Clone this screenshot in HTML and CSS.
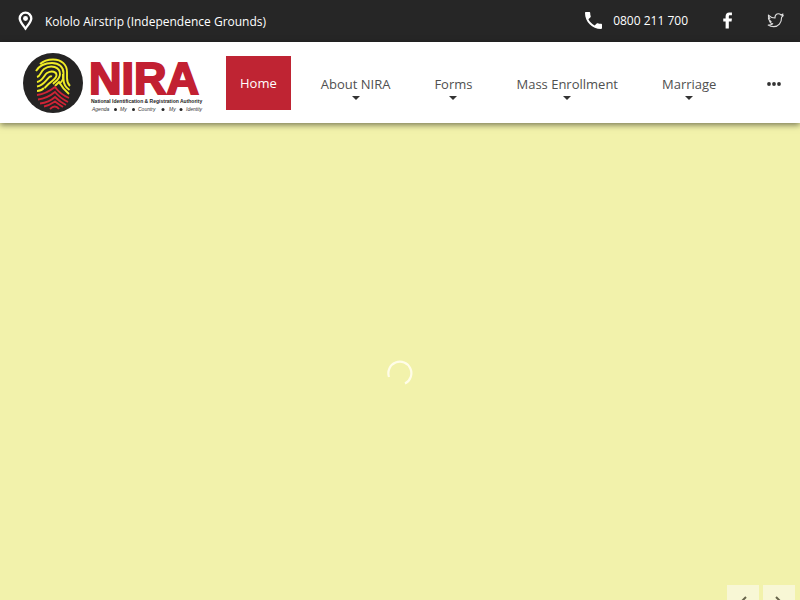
FILE: index.html
```html
<!DOCTYPE html>
<html lang="en">
<head>
<meta charset="utf-8">
<meta name="viewport" content="width=device-width, initial-scale=1">
<title>NIRA</title>
<link rel="stylesheet" href="styles.css">
</head>
<body>
<div class="topbar">
  <div class="address">
    <svg class="pin" viewBox="0 0 14 18" aria-hidden="true"><path fill="none" stroke="#fff" stroke-width="2.2" d="M7 16C4.500 12.500 1.600 9.500 1.600 6.600a5.400 5.400 0 0 1 10.800 0C12.400 9.500 9.500 12.500 7 16Z"/><circle cx="7" cy="6.600" r="2.300" fill="#fff"/></svg>
    <span>Kololo Airstrip (Independence Grounds)</span>
  </div>
  <div class="contacts">
    <a class="phone" href="tel:0800211700">
      <svg class="handset" viewBox="3 3 18 18" aria-hidden="true"><path fill="#fff" d="M6.620 10.790c1.440 2.830 3.760 5.140 6.590 6.590l2.200-2.200c.270-.270.670-.360 1.020-.240 1.120.370 2.330.570 3.570.570.550 0 1 .450 1 1V20c0 .550-.450 1-1 1C10.610 21 3 13.390 3 4c0-.550.450-1 1-1h3.500c.550 0 1 .450 1 1 0 1.250.200 2.450.570 3.570.110.350.030.740-.250 1.020z"/></svg>
      <span>0800 211 700</span>
    </a>
    <a class="social" href="#" aria-label="Facebook"><svg viewBox="0 0 18 18" aria-hidden="true"><path fill="#fff" d="M7 17.500V10H4.500V6.800H7V4.500C7 2 8.500 .500 10.700 .500h3v3h-2.100c-.900 0-1.200.400-1.200 1.200v2.100h3.300l-.400 3.200h-2.900v7.500Z"/></svg></a>
    <a class="social" href="#" aria-label="Twitter"><svg viewBox="0 0 18 18" aria-hidden="true"><path fill="none" stroke="#ddd" stroke-width="1.200" stroke-linejoin="round" d="M1.500 3.200C3.500 5.300 6 6.300 8.500 6.400 8.200 3.500 10 1.900 12 1.900c1.200 0 2.100.500 2.700 1.200l2.200-.900-1 1.900 1.300-.300-1.800 2C15.600 11.500 12 15.500 7 15.500c-2.200 0-4-.500-5.700-1.700 2 .100 3.500-.400 4.700-1.400-1.700-.200-2.700-1.100-3.200-2.400h1.500C2.500 9.300 1.500 8 1.500 6.200l1.600.500C1.700 5.600 1.100 4.500 1.500 3.200Z"/></svg></a>
  </div>
</div>
<header class="header">
  <a class="brand" href="#" aria-label="NIRA home">
    <svg class="logo" viewBox="0 0 184 62">
      <circle cx="31" cy="31" r="30" fill="#252424"/>
      <g fill="none" stroke="#f0ec26" stroke-width="1.900">
        <path d="M18 12Q23 7.500 31 7.500c9 0 14 5.500 14 12.500v6q0 5 3 8"/>
        <path d="M14 19c3-5 8-8 16-8 7 0 11.500 4 11.500 10v6q0 7 6 11"/>
        <path d="M15 25c4-1 3-5 7-8 7-5 16-2 16 5 0 5-4 7-7 10"/>
        <path d="M15 30c6-1 7-7 10-9 5-3 9.500-1 9.500 2 0 4-5 6-8 9l-4 4"/>
        <path d="M15 34.500c6-1 8-5 11-8q2-3 4-2"/>
        <path d="M15 39q4 0 7-3M41 22v5q-1 3-4 5M33 34l4-4q4 7 10 12"/>
      </g>
      <g fill="none" stroke="#d02436" stroke-width="1.900">
        <path d="M15 43q9-1 18-8 5 7 14 11"/>
        <path d="M16 47.500q9-1 17-7.500 5 6 13 10"/>
        <path d="M18 51.500q9-1 15-6.500 5 5 11 8"/>
        <path d="M22 54.500q5-1 11-5 4 3 8 5.500M28 57q5-5 9 0"/>
      </g>
      <text class="logo-name" x="67" y="42">NIRA</text>
      <text class="logo-full" x="69" y="51">National Identification &amp; Registration Authority</text>
      <g class="logo-motto"><text x="70" y="59">Agenda</text><text x="98" y="59">My</text><text x="116" y="59">Country</text><text x="147" y="59">My</text><text x="164" y="59">Identity</text></g>
      <g fill="#282828"><circle cx="93.500" cy="57.500" r="1.500"/><circle cx="111.500" cy="57.500" r="1.500"/><circle cx="141" cy="57.500" r="1.500"/><circle cx="159" cy="57.500" r="1.500"/></g>
    </svg>
  </a>
  <nav class="nav" aria-label="Main">
    <a class="home" href="#">Home</a>
    <a class="item" href="#">About NIRA</a>
    <a class="item" href="#">Forms</a>
    <a class="item" href="#">Mass Enrollment</a>
    <a class="item" href="#">Marriage</a>
  </nav>
  <button class="more" aria-label="More"><svg viewBox="0 0 14 4" aria-hidden="true"><circle cx="2" cy="2" r="1.900"/><circle cx="7" cy="2" r="1.900"/><circle cx="12" cy="2" r="1.900"/></svg></button>
</header>
<main class="hero">
  <svg class="spinner" viewBox="0 0 26 26" role="img" aria-label="Loading"><path fill="none" stroke="#fffde8" stroke-width="2.200" d="M2 17A11.500 11.500 0 1 1 18 23.500"/></svg>
  <div class="arrows">
    <button aria-label="Previous"><svg viewBox="0 0 12 16"><path d="M9 2 3 8l6 6"/></svg></button>
    <button aria-label="Next"><svg viewBox="0 0 12 16"><path d="m3 2 6 6-6 6"/></svg></button>
  </div>
</main>
</body>
</html>
```
FILE: styles.css
```css
* { box-sizing: border-box; }
body {
  margin: 0;
  height: 100vh;
  overflow: hidden;
  display: flex;
  flex-direction: column;
  font-family: "Open Sans", "Noto Sans", sans-serif;
  font-size: 12px;
  color: #333;
}
a { color: inherit; text-decoration: none; }
svg { display: block; }
button { border: 0; padding: 0; background: none; }

.topbar {
  flex: none;
  display: flex;
  justify-content: space-between;
  height: 42px;
  padding: 0 16px 0 18px;
  background: #262626;
  color: #fff;
}
.address { display: flex; align-items: center; gap: 12px; }
.pin { width: 15px; height: 20px; }
.contacts { display: flex; align-items: center; gap: 31px; padding-bottom: 2px; }
.phone { display: flex; align-items: center; gap: 11px; }
.handset { width: 17px; height: 17px; }
.social svg { width: 17px; height: 17px; }

.header {
  flex: none;
  position: relative;
  z-index: 1;
  display: flex;
  height: 81px;
  padding: 0 19px 0 22px;
  background: #fff;
  box-shadow: 0 2px 6px rgba(0, 0, 0, .5);
}
.brand { flex: none; padding-top: 10px; }
.logo { width: 184px; height: 62px; }
.logo-name {
  font: 700 45px "Liberation Sans", sans-serif;
  fill: #c22032;
  stroke: #c22032;
  stroke-width: 2;
}
.logo-full { font: 700 5px "Liberation Sans", sans-serif; fill: #222; }
.logo-motto { font: italic 5px "Liberation Sans", sans-serif; fill: #333; }
.nav {
  display: flex;
  align-items: flex-start;
  padding: 14px 0 0 20px;
  font-size: 13px;
  line-height: 20px;
  white-space: nowrap;
}
.home {
  height: 54px;
  margin-right: 8px;
  padding: 17px 14px;
  background: #bf2433;
  color: #fff;
}
.item {
  display: flex;
  flex-direction: column;
  align-items: center;
  padding: 18px 22px 0;
  color: #505050;
}
.item::after {
  content: "";
  margin-top: 2px;
  border: 4px solid transparent;
  border-top-color: #333;
  border-bottom: 0;
}
.more { align-self: center; margin-left: auto; padding-top: 2px; }
.more svg { width: 14px; height: 4px; fill: #333; }

.hero {
  flex: 1;
  position: relative;
  display: flex;
  align-items: center;
  justify-content: center;
  background: #f2f2ab;
}
.spinner { width: 26px; height: 26px; margin-top: 22px; }
.arrows {
  position: absolute;
  right: 5px;
  bottom: -17px;
  display: flex;
  gap: 4px;
}
.arrows button {
  display: grid;
  place-items: center;
  width: 32px;
  height: 32px;
  background: #f8f7d5;
}
.arrows svg {
  width: 12px;
  height: 16px;
  margin-top: 4px;
  fill: none;
  stroke: #68654b;
  stroke-width: 2;
}
```
